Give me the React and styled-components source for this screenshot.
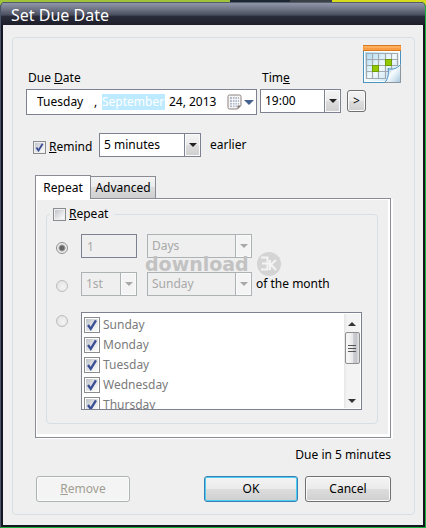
import { useState } from "react"
import styled, { createGlobalStyle } from "styled-components"

const GlobalStyle = createGlobalStyle`
  * {
    box-sizing: border-box;
  }
  body {
    margin: 0;
    background: #141722;
    color: #000;
    font-family: "Noto Sans", "Open Sans", sans-serif;
    font-size: 12px;
    line-height: 16px;
  }
  input, select, button {
    font: inherit;
    color: inherit;
    margin: 0;
  }
`

const Desktop = styled.div`
  min-height: 100vh;
  display: flex;
  flex-direction: column;
  padding-top: 2px;
  background: linear-gradient(90deg, #9fc43a 0 54%, #1d2733 54% 68%, #3b3f46 68% 78%, #d9dc1c 78%);
`

const Window = styled.div`
  flex: 1;
  display: flex;
  flex-direction: column;
  border-style: solid;
  border-width: 0 1px 1px;
  border-color: #17b53c #17b53c #17b53c #4a5468;
  border-radius: 5px 5px 0 0;
  background: #141722;
  overflow: hidden;
`

const TitleBar = styled.h1`
  margin: 0;
  height: 23px;
  padding-left: 10px;
  border-top: 1px solid #555c6c;
  background: linear-gradient(#9097a8 0%, #6d7283 30%, #494d5e 55%, #2b2c3a 60%, #1e1e2a 100%);
  color: #fff;
  font-size: 16px;
  font-weight: 400;
  line-height: 24px;
`

const Body = styled.form`
  flex: 1;
  margin: 0 2px 2px;
  padding: 12px 8px 10px 9px;
  background: #efefef;
  display: flex;
`

const Group = styled.div`
  flex: 1;
  min-width: 0;
  border: 1px solid #d5dfe5;
  border-radius: 4px;
  padding: 7px 12px 12px 13px;
`

const Fields = styled.div`
  display: flex;
  align-items: flex-start;
  padding-right: 1px;
`

const Field = styled.div`
  flex: ${p => (p.$grow ? 1 : "none")};
  display: flex;
  flex-direction: column;
  gap: 3px;
  padding-top: 25px;
  margin-right: ${p => (p.$grow ? 3 : 6)}px;
`

const FieldLabel = styled.label`
  padding-left: 2px;
`

const DateBox = styled.div`
  height: 26px;
  display: flex;
  align-items: center;
  padding: 0 2px 0 10px;
  border: 1px solid #7e8290;
  background: #fff;
`

const DatePart = styled.input`
  width: ${p => p.$w}px;
  height: 16px;
  padding: 0;
  border: 0;
  outline: 0;
  background: ${p => (p.$active ? "#bdeaff" : "transparent")};
  color: ${p => (p.$active ? "#fff" : "#000")};
`

const Comma = styled.span`
  width: ${p => p.$w}px;
`

const PickerButton = styled.button`
  margin-left: auto;
  padding: 0;
  border: 0;
  background: none;
  display: flex;
  align-items: center;
  gap: 2px;
`

const Side = styled.div`
  width: 54px;
  display: flex;
  flex-direction: column;
  gap: 7px;
`

const BigIcon = styled.svg`
  align-self: flex-end;
  display: block;
`

const face = "linear-gradient(#f4f4f4 0%, #ebebeb 48%, #dddddd 50%, #cfcfcf 100%)"

const Button = styled.button`
  width: ${p => p.$w}px;
  height: ${p => (p.$small ? 22 : 26)}px;
  padding: 0;
  border: 1px solid #707070;
  border-radius: 3px;
  background: ${face};
  box-shadow: inset 0 0 0 1px #fbfbfb;
  ${p => p.$primary && `
    border-color: #3c7fb1;
    box-shadow: inset 0 0 0 1px #48cdf4;
  `}
  &:disabled {
    border-color: #adb2b5;
    background: #f4f4f4;
    color: #a09f93;
  }
`

const SelectBox = styled.div`
  flex: none;
  width: ${p => p.$w}px;
  height: 24px;
  display: grid;
  border: 1px solid ${p => (p.$off ? "#adb2b5" : "#7e8290")};
  background: ${p => (p.$off ? "#efefef" : "#fff")};
  color: ${p => (p.$off ? "#a8a8a8" : "#000")};
`

const NativeSelect = styled.select`
  grid-area: 1 / 1;
  appearance: none;
  min-width: 0;
  padding: 0 18px 0 4px;
  border: 0;
  outline: 0;
  background: transparent;
  &:disabled {
    opacity: 1;
  }
`

const Arrow = styled.span`
  grid-area: 1 / 1;
  justify-self: end;
  pointer-events: none;
  width: 16px;
  display: flex;
  align-items: center;
  justify-content: center;
  border-left: 1px solid ${p => (p.$off ? "#adb2b5" : "#7e8290")};
  background: ${p => (p.$off ? "#f4f4f4" : face)};
  box-shadow: inset 0 0 0 1px #fafafa;
`

const Remind = styled.div`
  display: flex;
  align-items: center;
  margin: 18px 0;
  padding-left: 7px;
`

const Check = styled.label`
  display: flex;
  align-items: center;
  gap: 3px;
`

const Tick = styled.input`
  appearance: none;
  flex: none;
  width: ${p => p.$size || 13}px;
  height: ${p => p.$size || 13}px;
  border: 1px solid #8a8c8f;
  background: linear-gradient(135deg, #b9bec6, #f6f6f6 80%);
  background-clip: content-box;
  background-color: #f6f6f6;
  padding: 1px;
  &:checked {
    background-image:
      url("data:image/svg+xml,%3Csvg xmlns='http://www.w3.org/2000/svg' viewBox='0 0 12 12'%3E%3Cpath d='M2.6 6l2.3 3.3L9.4 2' fill='none' stroke='%233b4f94' stroke-width='2'/%3E%3C/svg%3E"),
      linear-gradient(135deg, #b9bec6, #f6f6f6 80%);
  }
`

const RemindCheck = styled(Check)`
  width: 66px;
  padding-top: 4px;
`

const Earlier = styled.span`
  padding-left: 9px;
`

const Tabs = styled.div`
  margin: 0 11px 0 9px;
`

const TabList = styled.div`
  display: flex;
  align-items: flex-end;
`

const Tab = styled.button`
  width: ${p => p.$w}px;
  height: ${p => (p.$active ? 24 : 22)}px;
  padding: 0;
  border: 1px solid #898c95;
  border-left-width: ${p => (p.$active ? 1 : 0)}px;
  border-bottom: 0;
  background: ${p => (p.$active ? "#fff" : face)};
  margin-bottom: ${p => (p.$active ? -1 : 0)}px;
`

const Panel = styled.div`
  border: 1px solid #898c95;
  padding: 7px 12px 13px 10px;
  background: #efefef;
  box-shadow: inset 1px 1px 0 #fff, inset -2px -3px 0 #fff, 2px 1px 0 #fff;
`

const Repeat = styled.fieldset`
  min-width: 0;
  margin: 0;
  padding: 12px 15px 13px 9px;
  border: 1px solid #d5dfe5;
  border-radius: 4px;
  display: flex;
  flex-direction: column;
  gap: 14px;
`

const Legend = styled.legend`
  margin-left: -6px;
  padding: 0 6px 0 3px;
`

const Line = styled.div`
  display: flex;
  align-items: ${p => (p.$top ? "flex-start" : "center")};
  padding-top: ${p => (p.$top ? 2 : 0)}px;
`

const Radio = styled.input`
  appearance: none;
  flex: none;
  width: 12px;
  height: 12px;
  margin: 3px 13px 0 0 !important;
  border: 1px solid #bcbcbc;
  border-radius: 50%;
  background: radial-gradient(circle at 60% 60%, #f4f4f4, #dedede);
  &:checked {
    border-color: #8e8f8f;
    background: radial-gradient(circle, #666 0 2px, #a4a4a4 3px, #efefef 4px);
  }
`

const Count = styled.input`
  width: 56px;
  height: 24px;
  padding: 0 5px;
  border: 1px solid #7e8290;
  background: #efefef;
  &:disabled {
    color: #a8a8a8;
  }
`

const Spacer = styled.span`
  width: 10px;
`

const OfMonth = styled.span`
  padding-left: 4px;
  white-space: nowrap;
`

const DayBox = styled.div`
  flex: 1;
  height: 98px;
  display: flex;
  border: 1px solid #7e8290;
  background: #fff;
`

const Days = styled.ul`
  flex: 1;
  margin: 0;
  padding: 2px 2px 0;
  list-style: none;
  overflow: hidden;
  color: #7b7b7b;
`

const Day = styled.li`
  height: 20px;
  display: flex;
  align-items: center;
`

const ScrollBar = styled.div`
  width: 16px;
  margin: 1px 1px 1px 0;
  display: flex;
  flex-direction: column;
  align-items: center;
  background: linear-gradient(90deg, #e6e6e6, #f3f3f3 20%, #f3f3f3);
`

const ScrollEnd = styled.svg`
  flex: none;
  display: block;
`

const Thumb = styled.div`
  width: 15px;
  height: 32px;
  display: flex;
  align-items: center;
  justify-content: center;
  border: 1px solid #8e8e8e;
  border-radius: 2px;
  background: linear-gradient(90deg, #f5f5f5 0 20%, #e9e9eb 50%, #cfd0d4 55%, #c4c5ca 80%, #e8e8e8);
`

const Track = styled.div`
  flex: 1;
`

const Due = styled.div`
  margin: 9px 11px 13px 0;
  text-align: right;
`

const Actions = styled.div`
  display: flex;
  gap: 7px;
  padding: 0 11px 0 10px;
`

const Push = styled.div`
  flex: 1;
`

const RepeatArea = styled.div`
  position: relative;
`

const Watermark = styled.div`
  position: absolute;
  top: 46px;
  left: 99px;
  display: flex;
  align-items: center;
  gap: 8px;
  pointer-events: none;
  color: #c2c2c2;
  font-family: "DejaVu Sans", sans-serif;
  font-size: 19px;
  font-weight: 700;
  line-height: 24px;
`

const Badge = styled.span`
  width: 24px;
  height: 24px;
  display: flex;
  align-items: center;
  justify-content: center;
  border-radius: 50%;
  background: #d4d4d4;
`

const CalendarSmall = () => (
  <svg width="15" height="16" viewBox="0 0 15 16" aria-hidden="true">
    <path d="M2.5 1h10a1.5 1.5 0 0 1 1.5 1.5v9L10.5 15h-8A1.5 1.5 0 0 1 1 13.500v-11A1.5 1.5 0 0 1 2.5 1z" fill="#f6f4f3" stroke="#8b8280" />
    <path d="M3 3h9v8l-2 2H3z" fill="#b4bccb" />
    <path d="M3 5.5h9M3 8.500h9M3 11h9M5.5 3v10M8 3v10M10.5 3v10" stroke="#fff" strokeWidth=".8" />
    <path d="M14 11.500h-3.500V15z" fill="#7d7472" />
  </svg>
)

const DueIcon = () => (
  <BigIcon width="38" height="38" viewBox="0 0 38 38" aria-hidden="true">
    <defs>
      <linearGradient id="sky" x1="0" y1="0" x2="1" y2="1">
        <stop offset="0" stopColor="#a9daf4" />
        <stop offset=".5" stopColor="#f2fafd" />
        <stop offset="1" stopColor="#b7def4" />
      </linearGradient>
      <linearGradient id="curl" x1="0" y1="0" x2="1" y2="1">
        <stop offset=".15" stopColor="#7fb0d6" />
        <stop offset=".45" stopColor="#f8fcfe" />
        <stop offset=".65" stopColor="#dbeaf4" />
        <stop offset="1" stopColor="#9fbfd6" />
      </linearGradient>
    </defs>
    <rect x=".5" y=".5" width="37" height="37" fill="#fff" stroke="#4b92bd" />
    <rect x="2" y="7" width="34" height="29" fill="url(#sky)" />
    <rect x="0" y="0" width="38" height="6" fill="#fb9d42" />
    <path d="M0 .5h38M0 5.500h38" stroke="#d97822" />
    <path d="M1 2h36" stroke="#ffc078" />
    <path d="M3 8.500h32M3 14.500h32M3 20.500h32M3 26.500h32M3 33.500h20M3.500 8v26M9.500 8v26M15.500 8v26M22.500 8v26M28.500 8v17M34.500 8v13" stroke="#a3a9ac" strokeWidth="1.200" fill="none" />
    <rect x="9.500" y="20.500" width="6" height="6" fill="#93c900" stroke="#6f9e08" />
    <rect x="22.500" y="14.500" width="6" height="6" fill="#93c900" stroke="#6f9e08" />
    <path d="M22 38c3-4 4-9 3-14.500 5 1.500 9 0 13-4.500v19z" fill="url(#curl)" />
    <path d="M22 37.500c3-4 4-8.500 3-14 5 1.500 9 0 12.500-4" fill="none" stroke="#4b8fc0" />
    <path d="M22 37.500h15.500V20" fill="none" stroke="#8b969e" />
  </BigIcon>
)

const Chevron = ({ color = "#222", w = 8 }) => (
  <svg width={w} height={w / 2} viewBox="0 0 8 4" aria-hidden="true">
    <path d="M0 0h8L4 4z" fill={color} />
  </svg>
)

const Select = ({ width, options, disabled, ...rest }) => (
  <SelectBox $w={width} $off={disabled}>
    <NativeSelect disabled={disabled} {...rest}>
      {options.map(o => <option key={o}>{o}</option>)}
    </NativeSelect>
    <Arrow $off={disabled}><Chevron color={disabled ? "#a8a8a8" : "#222"} /></Arrow>
  </SelectBox>
)

const week = ["Sunday", "Monday", "Tuesday", "Wednesday", "Thursday"]

const App = () => {
  const [tab, setTab] = useState("repeat")

  return (
    <>
      <GlobalStyle />
      <Desktop>
        <Window>
          <TitleBar>Set Due Date</TitleBar>
          <Body onSubmit={e => e.preventDefault()}>
            <Group>
              <Fields>
                <Field $grow>
                  <FieldLabel htmlFor="month">Due <u>D</u>ate</FieldLabel>
                  <DateBox>
                    <DatePart $w={57} aria-label="Weekday" defaultValue="Tuesday" />
                    <Comma $w={8}>,</Comma>
                    <DatePart $w={63} $active id="month" defaultValue="September" />
                    <Comma $w={4} />
                    <DatePart $w={20} aria-label="Day" defaultValue="24," />
                    <DatePart $w={32} aria-label="Year" defaultValue="2013" />
                    <PickerButton type="button" aria-label="Open calendar">
                      <CalendarSmall />
                      <Chevron color="#44618f" w={10} />
                    </PickerButton>
                  </DateBox>
                </Field>
                <Field>
                  <FieldLabel htmlFor="time">Tim<u>e</u></FieldLabel>
                  <Select id="time" width={81} options={["19:00"]} />
                </Field>
                <Side>
                  <DueIcon />
                  <Button type="button" $w={19} $small>&gt;</Button>
                </Side>
              </Fields>

              <Remind>
                <RemindCheck>
                  <Tick type="checkbox" defaultChecked />
                  <span><u>R</u>emind</span>
                </RemindCheck>
                <Select aria-label="Remind me" width={102} options={["5 minutes"]} />
                <Earlier>earlier</Earlier>
              </Remind>

              <Tabs>
                <TabList role="tablist">
                  <Tab type="button" role="tab" $w={56} $active={tab === "repeat"} onClick={() => setTab("repeat")}>Repeat</Tab>
                  <Tab type="button" role="tab" $w={65} $active={tab === "advanced"} onClick={() => setTab("advanced")}>Advanced</Tab>
                </TabList>
                <Panel role="tabpanel">
                  <RepeatArea>
                    <Repeat>
                      <Legend>
                        <Check>
                          <Tick type="checkbox" />
                          <span><u>R</u>epeat</span>
                        </Check>
                      </Legend>
                      <Line>
                        <Radio type="radio" name="mode" aria-label="Every" defaultChecked disabled />
                        <Count aria-label="Count" defaultValue="1" disabled />
                        <Spacer />
                        <Select aria-label="Unit" width={105} options={["Days"]} disabled />
                      </Line>
                      <Line>
                        <Radio type="radio" name="mode" aria-label="Monthly" disabled />
                        <Select aria-label="Which" width={56} options={["1st"]} disabled />
                        <Spacer />
                        <Select aria-label="Weekday of the month" width={105} options={["Sunday"]} disabled />
                        <OfMonth>of the month</OfMonth>
                      </Line>
                      <Line $top>
                        <Radio type="radio" name="mode" aria-label="On days" disabled />
                        <DayBox>
                          <Days>
                            {week.map(d => (
                              <Day key={d}>
                                <Check>
                                  <Tick type="checkbox" $size={16} defaultChecked disabled />
                                  {d}
                                </Check>
                              </Day>
                            ))}
                          </Days>
                          <ScrollBar>
                            <ScrollEnd width="16" height="18" viewBox="0 0 16 18"><path d="M4 12h8L8 8z" fill="#333" /></ScrollEnd>
                            <Thumb>
                              <svg width="8" height="9" viewBox="0 0 8 9"><path d="M0 1.500h8M0 4.500h8M0 7.500h8" stroke="#555" /></svg>
                            </Thumb>
                            <Track />
                            <ScrollEnd width="16" height="16" viewBox="0 0 16 16"><path d="M4 7h8l-4 4z" fill="#333" /></ScrollEnd>
                          </ScrollBar>
                        </DayBox>
                      </Line>
                    </Repeat>
                    <Watermark>
                      download
                      <Badge>
                        <svg width="18" height="16" viewBox="0 0 18 16" fill="none" stroke="#f4f4f4" strokeWidth="2">
                          <path d="M1 1.500h6.500v12H1M2 7.500h9M10 4v10M16 4l-5 4.500 5 5.500" />
                        </svg>
                      </Badge>
                    </Watermark>
                  </RepeatArea>
                </Panel>
              </Tabs>

              <Due>Due in 5 minutes</Due>
              <Actions>
                <Button type="button" $w={94} disabled><u>R</u>emove</Button>
                <Push />
                <Button type="submit" $w={94} $primary>OK</Button>
                <Button type="button" $w={86}>Cancel</Button>
              </Actions>
            </Group>
          </Body>
        </Window>
      </Desktop>
    </>
  )
}

export default App
